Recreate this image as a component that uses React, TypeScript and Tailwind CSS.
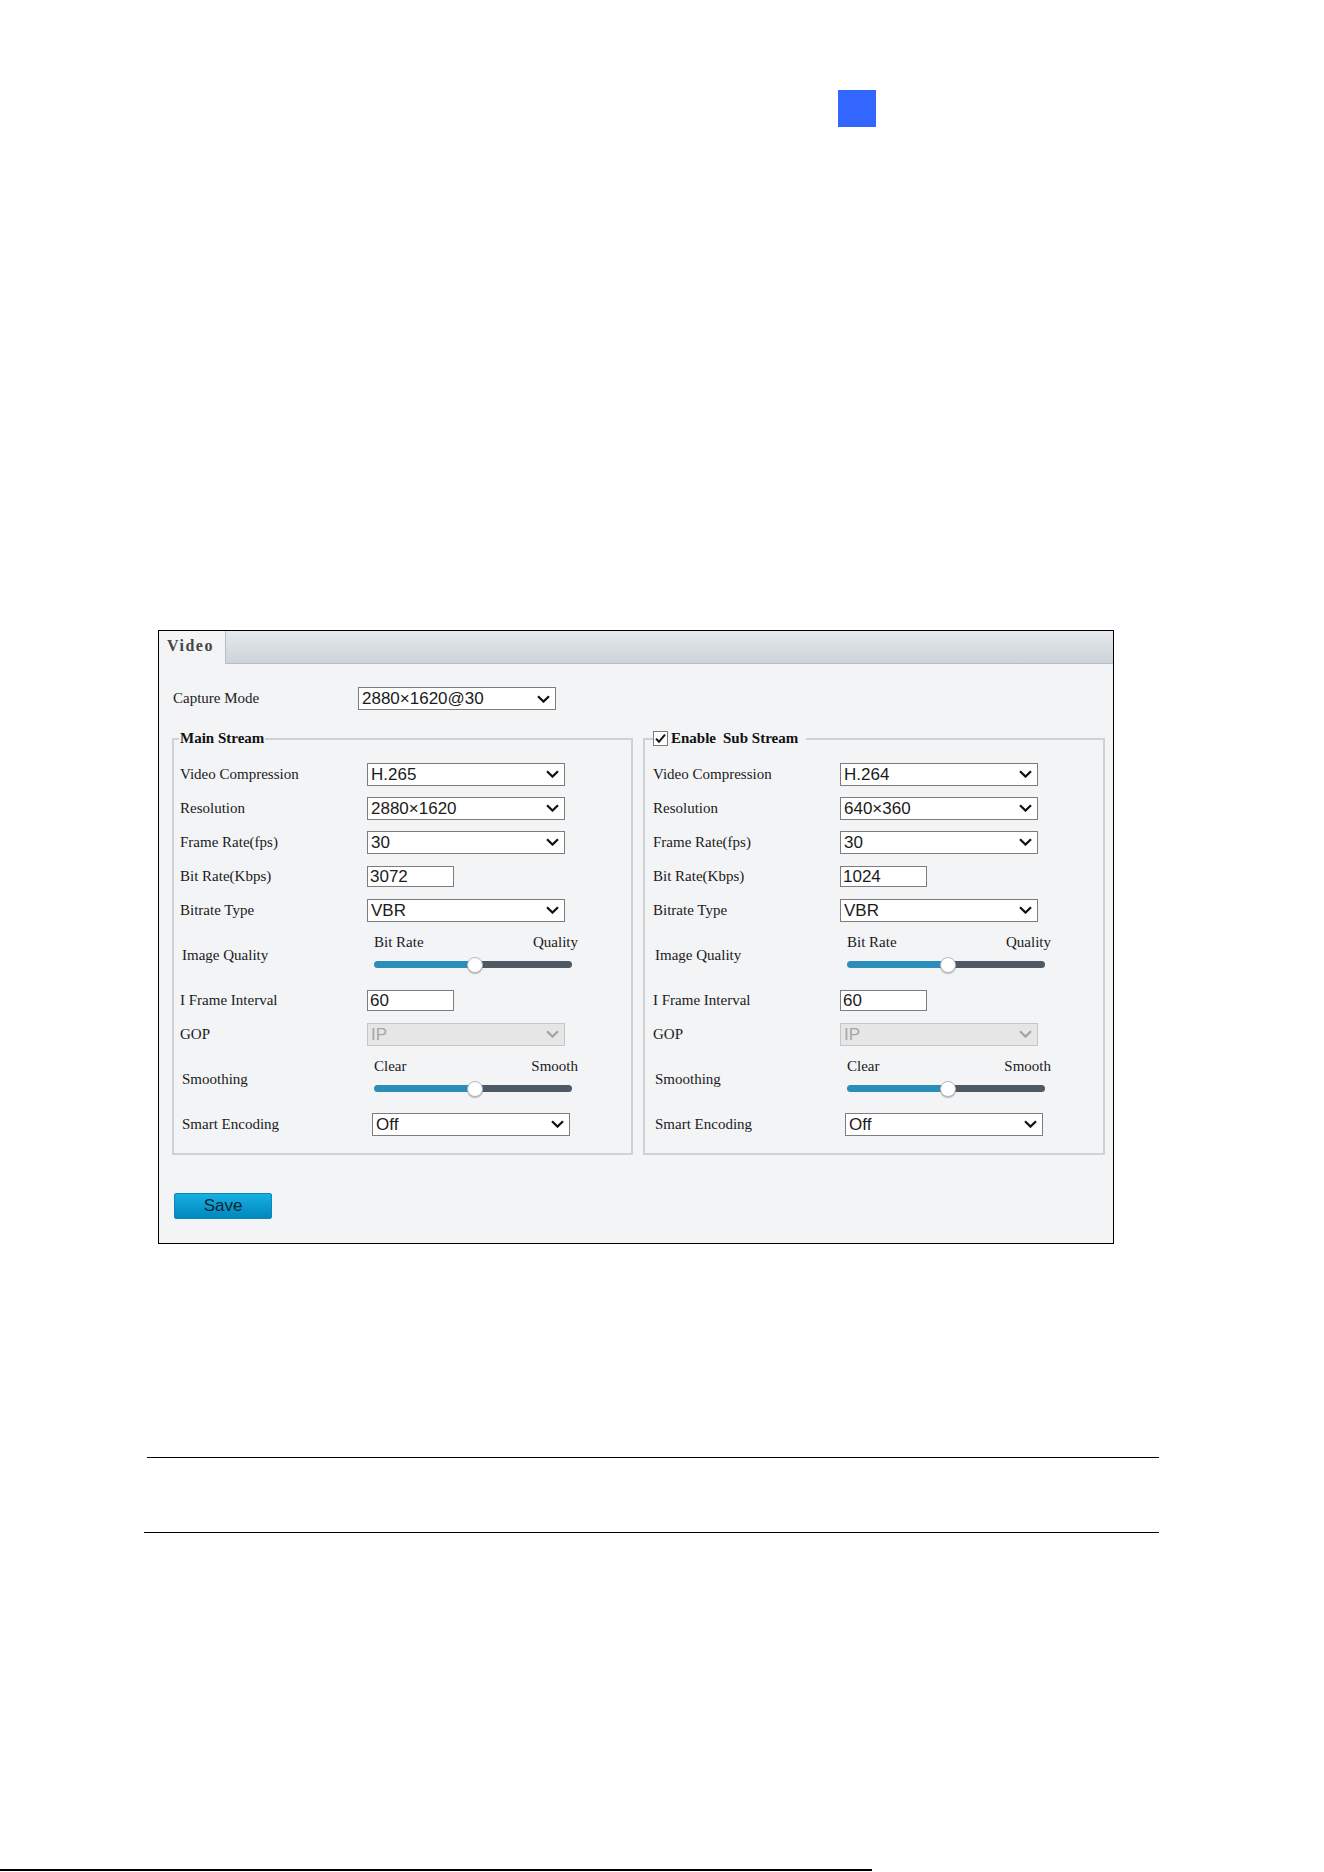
import React from "react";

type Opt = { label: string; value: string; kind: "select" | "input" | "disabled" };

const mainRows: Opt[] = [
  { label: "Video Compression", value: "H.265", kind: "select" },
  { label: "Resolution", value: "2880×1620", kind: "select" },
  { label: "Frame Rate(fps)", value: "30", kind: "select" },
  { label: "Bit Rate(Kbps)", value: "3072", kind: "input" },
  { label: "Bitrate Type", value: "VBR", kind: "select" },
];

const subRows: Opt[] = [
  { label: "Video Compression", value: "H.264", kind: "select" },
  { label: "Resolution", value: "640×360", kind: "select" },
  { label: "Frame Rate(fps)", value: "30", kind: "select" },
  { label: "Bit Rate(Kbps)", value: "1024", kind: "input" },
  { label: "Bitrate Type", value: "VBR", kind: "select" },
];

function Chevron({ disabled }: { disabled?: boolean }) {
  return (
    <svg width="13" height="8" viewBox="0 0 13 8" className="shrink-0">
      <path
        d="M1 1.2 6.5 6.6 12 1.2"
        fill="none"
        stroke={disabled ? "#a3a3a3" : "#111111"}
        strokeWidth="2.2"
      />
    </svg>
  );
}

function Select({ value, disabled }: { value: string; disabled?: boolean }) {
  return (
    <div
      className={`flex h-[23px] w-[198px] items-center justify-between border pl-[3px] pr-[5px] font-['Liberation_Sans',Arial,sans-serif] text-[17px] leading-none ${
        disabled
          ? "border-[#c6c6c6] bg-[#e6e6e6] text-[#a6a6a6]"
          : "border-[#7d7d7d] bg-white text-[#1b1b1b]"
      }`}
    >
      <span>{value}</span>
      <Chevron disabled={disabled} />
    </div>
  );
}

function TextBox({ value }: { value: string }) {
  return (
    <div className="flex h-[21px] w-[87px] items-center border border-[#7d7d7d] bg-white pl-[2px] font-['Liberation_Sans',Arial,sans-serif] text-[17px] leading-none text-[#1b1b1b]">
      {value}
    </div>
  );
}

function Row({ label, value, kind }: Opt) {
  return (
    <div className="flex h-[34px] items-center">
      <div className="w-[187px] text-[15px]">{label}</div>
      {kind === "input" ? (
        <TextBox value={value} />
      ) : (
        <Select value={value} disabled={kind === "disabled"} />
      )}
    </div>
  );
}

function SliderRow({ label, left, right }: { label: string; left: string; right: string }) {
  return (
    <div className="flex h-[56px]">
      <div className="w-[189px] self-center pl-[2px] pt-[1px] text-[15px]">{label}</div>
      <div className="ml-[5px] flex w-[204px] flex-col">
        <div className="mt-[7px] flex h-[17px] items-center justify-between text-[15px] leading-[17px]">
          <span>{left}</span>
          <span>{right}</span>
        </div>
        <div className="relative mt-[10px] flex h-[7px] w-[198px]">
          <div className="w-[51%] rounded-l-full bg-[#2d8dba]" />
          <div className="flex-1 rounded-r-full bg-[#4d5a66]" />
          <div className="absolute left-[51%] top-[-4px] h-[16px] w-[16px] -translate-x-1/2 rounded-full border border-[#b9b9b9] bg-white shadow-[0_1px_1px_rgba(0,0,0,0.25)]" />
        </div>
      </div>
    </div>
  );
}

function StreamBody({ rows }: { rows: Opt[] }) {
  return (
    <div className="flex flex-col">
      {rows.map((r) => (
        <Row key={r.label} {...r} />
      ))}
      <SliderRow label="Image Quality" left="Bit Rate" right="Quality" />
      <Row label="I Frame Interval" value="60" kind="input" />
      <Row label="GOP" value="IP" kind="disabled" />
      <SliderRow label="Smoothing" left="Clear" right="Smooth" />
      <div className="flex h-[34px] items-center">
        <div className="w-[192px] pl-[2px] text-[15px]">Smart Encoding</div>
        <Select value="Off" />
      </div>
    </div>
  );
}

function CheckBox() {
  return (
    <svg width="15" height="15" viewBox="0 0 15 15" className="shrink-0">
      <rect x="0.5" y="0.5" width="14" height="14" fill="#ffffff" stroke="#7a7a7a" />
      <path d="M3 7.6 6 10.8 12 3.6" fill="none" stroke="#111111" strokeWidth="2" />
    </svg>
  );
}

export default function App() {
  return (
    <div className="relative flex h-[1872px] w-[1324px] flex-col overflow-hidden bg-white font-['Liberation_Serif','Times_New_Roman',serif] text-[#1a1a1a]">
      <div className="ml-[838px] mt-[90px] h-[37px] w-[38px] bg-[#3366ff]" />

      {/* video settings panel */}
      <div className="ml-[158px] mt-[503px] flex h-[614px] w-[956px] flex-col border border-black bg-[#f3f4f6]">
        <div className="flex h-[33px] shrink-0">
          <div className="flex w-[66px] items-center pb-[3px] pl-[8px] text-[16px] font-bold tracking-[1.5px] text-[#454545]">
            Video
          </div>
          <div className="flex-1 border-b border-l border-[#b6bec6] bg-gradient-to-b from-[#e7eaed] to-[#cdd3d9]" />
        </div>

        <div className="ml-[14px] mt-[23px] flex h-[23px] items-center">
          <div className="w-[185px] text-[15px]">Capture Mode</div>
          <Select value="2880×1620@30" />
        </div>

        <div className="ml-[13px] mt-[20px] flex gap-[10px]">
          <fieldset className="h-[425px] w-[461px] border-2 border-[#cfd2d5] px-[6px] pt-[10px]">
            <legend className="ml-[-1px] px-[1px] text-[15px] font-bold leading-[17px] text-[#111]">
              Main Stream
            </legend>
            <StreamBody rows={mainRows} />
          </fieldset>
          <fieldset className="h-[425px] w-[462px] border-2 border-[#cfd2d5] px-[8px] pt-[10px]">
            <legend className="flex items-center pr-[8px] text-[15px] font-bold leading-[17px] text-[#111]">
              <CheckBox />
              <span className="ml-[3px]">Enable</span>
              <span className="ml-[7px]">Sub Stream</span>
            </legend>
            <StreamBody rows={subRows} />
          </fieldset>
        </div>

        <button className="ml-[15px] mt-[38px] h-[26px] w-[98px] rounded-[2px] border border-[#0a86b8] bg-gradient-to-b from-[#17b0e2] to-[#0088bd] pb-[2px] font-['Liberation_Sans',Arial,sans-serif] text-[17px] leading-none text-[#0b2533]">
          Save
        </button>
      </div>

      <div className="ml-[147px] mt-[213px] h-px w-[1012px] bg-black" />
      <div className="ml-[144px] mt-[74px] h-px w-[1015px] bg-black" />

      <div className="mb-[1px] mt-auto h-[2px] w-[872px] bg-black" />
    </div>
  );
}
